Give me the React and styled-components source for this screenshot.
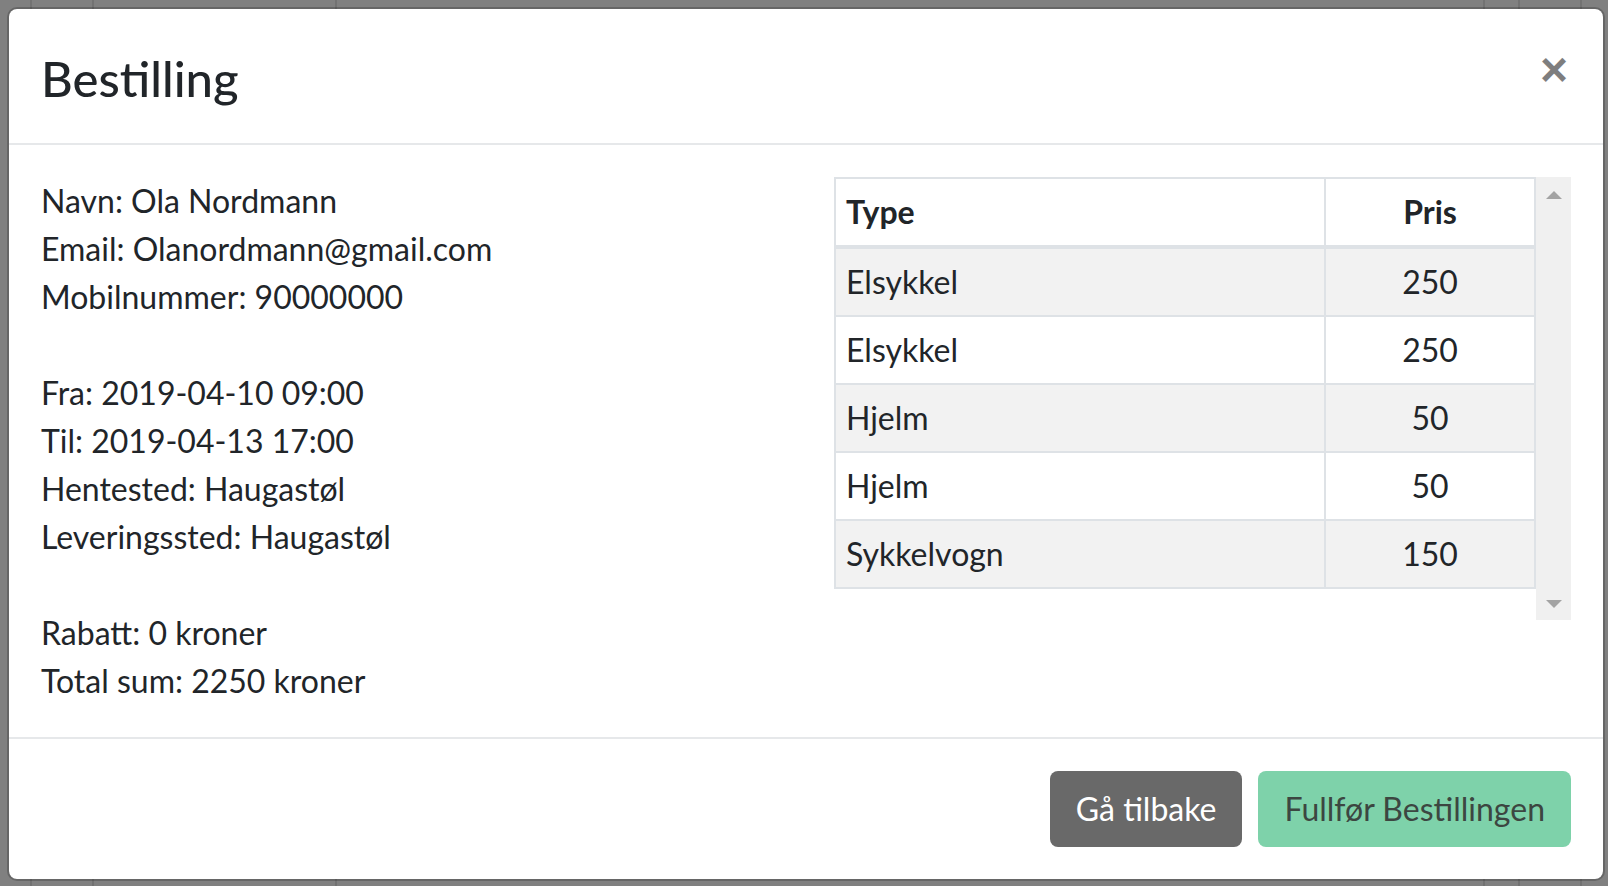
import React from "react";
import styled, { createGlobalStyle } from "styled-components";

const GlobalStyle = createGlobalStyle`
  html, body {
    margin: 0;
    padding: 0;
  }
  body {
    font-family: Lato, "Open Sans", "Liberation Sans", sans-serif;
    color: #212529;
    background: #808080;
  }
  * {
    box-sizing: border-box;
  }
`;

const Backdrop = styled.div`
  min-height: 886px;
  padding: 7px 3px 8px 7px;
  background-color: #808080;
  background-image:
    linear-gradient(#727272, #727272),
    linear-gradient(#727272, #727272),
    linear-gradient(#727272, #727272),
    linear-gradient(#727272, #727272),
    linear-gradient(#727272, #727272),
    linear-gradient(#727272, #727272);
  background-size: 2px 100%;
  background-repeat: no-repeat;
  background-position: 30px 0, 92px 0, 335px 0, 1483px 0, 1518px 0, 1580px 0;
`;

const Modal = styled.div`
  background: #fff;
  background-clip: padding-box;
  border: 2px solid rgba(0, 0, 0, 0.2);
  border-radius: 10px;
  display: flex;
  flex-direction: column;
`;

const Header = styled.header`
  display: flex;
  align-items: flex-start;
  justify-content: space-between;
  padding: 32px;
  border-bottom: 2px solid #e6e8ea;
`;

const Title = styled.h4`
  margin: 0;
  padding-top: 4px;
  font-size: 49px;
  line-height: 66px;
  font-weight: 500;
  color: #212529;
`;

const Close = styled.button`
  margin: -32px -32px -32px auto;
  padding: 37px 35px 27px 32px;
  border: 0;
  background: transparent;
  font-family: "Liberation Sans", Arial, sans-serif;
  font-size: 48px;
  font-weight: 700;
  line-height: 1;
  color: #000;
  opacity: 0.5;
  cursor: pointer;
`;

const Body = styled.div`
  padding: 32px;
  display: grid;
  grid-template-columns: 1fr 1fr;
  column-gap: 60px;
  font-size: 32px;
  line-height: 48px;
`;

const Info = styled.div`
  display: flex;
  flex-direction: column;
`;

const Group = styled.div`
  & + & {
    margin-top: 48px;
  }
`;

const Line = styled.p`
  margin: 0;
`;

const ScrollBox = styled.div`
  display: flex;
  align-items: flex-start;
  height: 443px;
  margin-left: 1px;
`;

const Table = styled.table`
  width: 702px;
  border-collapse: collapse;
  border: 2px solid #dee2e6;
`;

const Th = styled.th`
  padding: 9px 10px;
  border: 2px solid #dee2e6;
  border-bottom-width: 4px;
  text-align: ${(p) => (p.$center ? "center" : "left")};
  font-weight: 700;
  width: ${(p) => p.$width || "auto"};
`;

const Row = styled.tr`
  background: ${(p) => (p.$striped ? "#f2f2f2" : "#fff")};
`;

const Td = styled.td`
  padding: 9px 10px;
  border: 2px solid #dee2e6;
  text-align: ${(p) => (p.$center ? "center" : "left")};
`;

const Track = styled.div`
  align-self: stretch;
  width: 35px;
  background: #f0f0f0;
  display: flex;
  flex-direction: column;
  justify-content: space-between;
  align-items: center;
  padding: 14px 0 12px;
`;

const Footer = styled.footer`
  display: flex;
  justify-content: flex-end;
  gap: 16px;
  padding: 32px;
  border-top: 2px solid #e6e8ea;
`;

const Button = styled.button`
  font-family: inherit;
  font-size: 32px;
  line-height: 48px;
  padding: 12px 24px;
  border: 2px solid transparent;
  border-radius: 8px;
  background: ${(p) => (p.$variant === "success" ? "#7ed2aa" : "#696969")};
  color: ${(p) => (p.$variant === "success" ? "#3c4641" : "#fff")};
  cursor: pointer;
`;

const Arrow = ({ down }) => (
  <svg width="16" height="8" viewBox="0 0 16 8">
    <polygon points={down ? "0,0 16,0 8,8" : "0,8 16,8 8,0"} fill="#a3a3a3" />
  </svg>
);

const items = [
  ["Elsykkel", 250],
  ["Elsykkel", 250],
  ["Hjelm", 50],
  ["Hjelm", 50],
  ["Sykkelvogn", 150],
];

export default function App() {
  return (
    <>
      <GlobalStyle />
      <Backdrop>
        <Modal>
          <Header>
            <Title>Bestilling</Title>
            <Close aria-label="Close">×</Close>
          </Header>
          <Body>
            <Info>
              <Group>
                <Line>Navn: Ola Nordmann</Line>
                <Line>Email: Olanordmann@gmail.com</Line>
                <Line>Mobilnummer: 90000000</Line>
              </Group>
              <Group>
                <Line>Fra: 2019-04-10 09:00</Line>
                <Line>Til: 2019-04-13 17:00</Line>
                <Line>Hentested: Haugastøl</Line>
                <Line>Leveringssted: Haugastøl</Line>
              </Group>
              <Group>
                <Line>Rabatt: 0 kroner</Line>
                <Line>Total sum: 2250 kroner</Line>
              </Group>
            </Info>
            <ScrollBox>
              <Table>
                <thead>
                  <tr>
                    <Th>Type</Th>
                    <Th $center $width="210px">Pris</Th>
                  </tr>
                </thead>
                <tbody>
                  {items.map(([type, price], i) => (
                    <Row key={i} $striped={i % 2 === 0}>
                      <Td>{type}</Td>
                      <Td $center>{price}</Td>
                    </Row>
                  ))}
                </tbody>
              </Table>
              <Track>
                <Arrow />
                <Arrow down />
              </Track>
            </ScrollBox>
          </Body>
          <Footer>
            <Button>Gå tilbake</Button>
            <Button $variant="success">Fullfør Bestillingen</Button>
          </Footer>
        </Modal>
      </Backdrop>
    </>
  );
}
